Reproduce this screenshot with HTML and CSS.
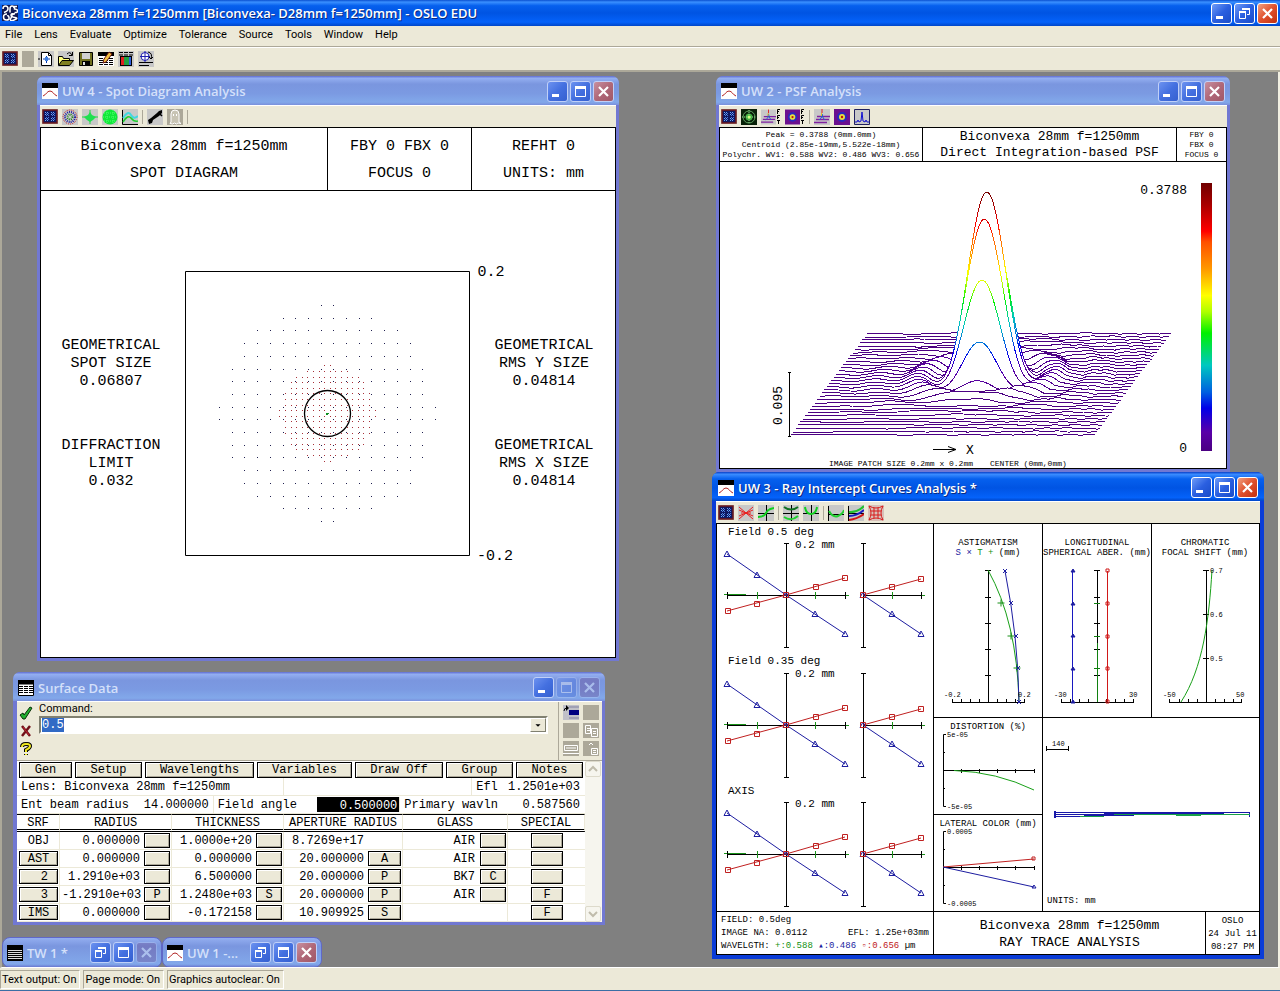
FILE: index.html
```html
<!DOCTYPE html>
<html lang="en">
<head>
<meta charset="utf-8">
<title>OSLO EDU</title>
<link rel="stylesheet" href="styles.css">
</head>
<body>
<svg class="defs" aria-hidden="true">
  <defs>
    <symbol id="i-oslo" viewBox="0 0 16 16"><path d="M0 0h16v16H0z" fill="#101850"/><path d="M1 4q0-3 2.500-3T6 4q0 2-4 3.500M8 7.500V4q0-3 2-3t2 2M15 1.500h-2.500v2.500q3 0 3 2t-3 1.500M5 9q-3.500 0-3.500 3t3 3 2.500-2.500T5 11M13 9q-4-1-4 1t4 2.500-1 2.500-3-2 2-3" fill="none" stroke="#fff" stroke-width="1.500"/></symbol>
    <symbol id="i-graph" viewBox="0 0 16 16"><path d="M0 0h16v16H0z" fill="#fff"/><path d="M0 0h16v5H0z"/><path d="M1 13c3-1 4-5 7-5s4 4 7 5" fill="none" stroke="#b02020"/></symbol>
    <symbol id="i-text" viewBox="0 0 16 16"><path d="M0 0h16v16H0z"/><path d="M1 5.500h14M1 7.500h14M1 9.500h14M1 11.500h14M1 13.500h14" stroke="#ddd"/></symbol>
    <symbol id="i-sheet" viewBox="0 0 16 16"><path d="M0 0h16v16H0z" fill="#fff"/><path d="M0 0h16v4H0zM.5 4v11.500h15V4" stroke="#000" fill="none"/><path d="M0 0h16v4H0z"/><path d="M1 6.500h14M1 8.500h14M1 10.500h14M1 12.500h14" stroke="#000" stroke-dasharray="4 1"/></symbol>
    <symbol id="i-wins" viewBox="0 0 16 16"><path d="M0 0h16v15H0z" fill="#b8b8b8"/><path d="M1 1h14v13H1z" fill="#101860" stroke="#701818" stroke-width="1.500"/><path d="M3 3.500h4M9 3.500h4M3 5.500h4M9 5.500h4M3 9.500h4M9 9.500h4M3 11.500h4M9 11.500h4" stroke="#68a8f8" stroke-dasharray="1 1"/><path d="M4 4.500h3M10 4.500h3M4 6.500h3M10 6.500h3M4 8.500h3M10 8.500h3M4 10.500h3M10 10.500h3" stroke="#4878e0" stroke-dasharray="1 1"/></symbol>
    <symbol id="i-off" viewBox="0 0 12 16"><path d="M0 0h12v16H0z" fill="#aca899"/></symbol>
    <symbol id="i-new" viewBox="0 0 16 16"><path d="M0 0h16v16H0z" fill="#c8c8c8"/><path d="M3.500 1.500h7l3 3v10h-10z" fill="#fff" stroke="#000"/><path d="M10.500 1.500v3h3" fill="none" stroke="#000"/><path d="M5 8h7M8.500 5v7" stroke="#0038b0"/><path d="M7 6h3v4H7z" fill="#4080e0"/><path d="M0 8h2" stroke="#000"/></symbol>
    <symbol id="i-open" viewBox="0 0 16 16"><path d="M0 0h16v16H0z" fill="#c8c8c8"/><path d="M.5 14V5.500h4l1 2h6v2" fill="#ffff80" stroke="#000"/><path d="M.5 14.500l3.500-5h11.500l-4 5z" fill="#808020" stroke="#000"/><path d="M9 3q3-3 5 1M14.500 1v3.500H11" fill="none" stroke="#000"/></symbol>
    <symbol id="i-save" viewBox="0 0 16 16"><path d="M1.500 1.500h13v13h-13z" fill="#707020" stroke="#000"/><path d="M4 2h8v6H4z" fill="#d0d0d0"/><path d="M4 10h8v5H4z"/><path d="M5 11h2v3H5z" fill="#ddd"/></symbol>
    <symbol id="i-edit" viewBox="0 0 16 16"><path d="M0 1h16v14H0z" fill="#fff"/><path d="M0 1h16v4H0z"/><path d="M1 7.500h14M1 9.500h14M1 11.500h14M1 13.500h14" stroke="#000" stroke-dasharray="4 1"/><path d="M11 1l3 2-6 8-3 1 1-4z" fill="#f0c040" stroke="#601010"/></symbol>
    <symbol id="i-spec" viewBox="0 0 16 16"><path d="M0 0h16v16H0z" fill="#c8c8c8"/><path d="M1 1.500h14M1 4h14" stroke="#000" stroke-dasharray="4 1"/><path d="M2 5h12v10H2z"/><path d="M3 6h3v8H3z" fill="#e02020"/><path d="M6 6h5v8H6z" fill="#20a040"/><path d="M11 6h2v8h-2z" fill="#3060e0"/></symbol>
    <symbol id="i-opt" viewBox="0 0 16 16"><path d="M0 0h16v16H0z" fill="#c8c8c8"/><circle cx="7" cy="5.500" r="4" fill="#fff" stroke="#2020b0"/><path d="M2 5.500h10M7 0v11" stroke="#2020b0"/><path d="M10 1q5 1 3 7l-2-2M13 8l2-2M1 11.500h14M1 14.500h10" fill="none" stroke="#000"/></symbol>
    <symbol id="i-rings" viewBox="0 0 16 16"><path d="M0 0h16v16H0z" fill="#c8c8c8"/><g fill="none" stroke-dasharray="1 1"><circle cx="8" cy="8" r="7" stroke="#c02020"/><circle cx="8" cy="8" r="5" stroke="#2020a0" stroke-width="2"/><circle cx="8" cy="8" r="2.500" stroke="#208020" stroke-width="2"/></g></symbol>
    <symbol id="i-spotv" viewBox="0 0 16 16"><path d="M0 0h16v16H0z" fill="#c8c8c8"/><path d="M8 1v14M0 8h16" stroke="#20d840"/><path d="M8 3l2 3 4 2-3 3-3 2-3-2-3-3 4-2z" fill="#20e050"/></symbol>
    <symbol id="i-ball" viewBox="0 0 16 16"><path d="M0 0h16v16H0z" fill="#c8c8c8"/><circle cx="8" cy="8" r="7.500" fill="#10e838"/><path d="M2 4h12M1 8h14M2 12h12M5 1v14M11 1v14" stroke="#50ff70" stroke-dasharray="1 1"/></symbol>
    <symbol id="i-curve" viewBox="0 0 16 16"><path d="M0 0h16v16H0z" fill="#c8c8c8"/><path d="M.5 1v14.500H16" fill="none" stroke="#000"/><path d="M1 9q5-8 8-3t7 1" fill="none" stroke="#40d8e0" stroke-width="2"/><path d="M1 13q5-8 8-4t7 3" fill="none" stroke="#20d030" stroke-width="1.500"/></symbol>
    <symbol id="i-plane" viewBox="0 0 16 16"><path d="M0 0h16v16H0z" fill="#c8c8c8"/><path d="M1 11l3-2 6-5 2-2 3-1v3l-3 3-6 4-1 3-3 1z"/><path d="M12 4l3 3" stroke="#000" stroke-width="1.500"/></symbol>
    <symbol id="i-ghost" viewBox="0 0 16 16"><path d="M0 0h16v16H0z" fill="#aca899"/><path d="M4 13V5q0-4 4-4t4 4v8l2 1.500-3-.5-1.500 1-2-1-2 1-2.500-.5z" fill="#c8c4b4" stroke="#fff"/><path d="M6 5h1v2H6zM9 5h1v2H9z" fill="#fff"/></symbol>
    <symbol id="i-radar" viewBox="0 0 16 16"><path d="M0 0h16v16H0z" fill="#082008"/><circle cx="8" cy="8" r="6" fill="none" stroke="#60a060"/><circle cx="8" cy="8" r="3.500" fill="#40b040"/><path d="M8 1v14M1 8h14" stroke="#90e090" stroke-dasharray="1 1"/><circle cx="8" cy="8" r="1.500" fill="#d0ff80"/></symbol>
    <symbol id="i-psf" viewBox="0 0 16 16"><path d="M0 0h16v16H0z" fill="#c8c8c8"/><path d="M3 7.500h13M2 10.500h13M0 13.500h13" stroke="#8020a0" stroke-width="1.300"/><path d="M5 11q3-1 3-6 1 5 3 6" fill="none" stroke="#2060d0"/><path d="M8 0v4" stroke="#e02020"/><path d="M7.500 4v3" stroke="#e0c020"/></symbol>
    <symbol id="i-map" viewBox="0 0 16 16"><path d="M0 0h16v16H0z" fill="#6a1090"/><circle cx="8" cy="8" r="5" fill="#2828c0"/><circle cx="8" cy="8" r="3" fill="#e8e040"/><circle cx="8" cy="8" r="1.200" fill="#c01010"/></symbol>
    <symbol id="i-fft" viewBox="0 0 5 16"><path d="M1.500 5V.5H4M1 2.500h2M1.500 10V6.500H4M1 8.500h2M1 11.500h3M2.500 11v4" fill="none" stroke="#000"/></symbol>
    <symbol id="i-line" viewBox="0 0 16 16"><path d="M.5.5h15v15H.5z" fill="#c8c8c8" stroke="#202060"/><path d="M1 13h2l1-2 1 2 2-1 1-9 1 9 2 1 1-2 1 2h2" fill="none" stroke="#1010d0"/></symbol>
    <symbol id="i-fan" viewBox="0 0 16 16"><path d="M0 0h16v16H0z" fill="#c8c8c8"/><path d="M1 2l14 12M1 14L15 2M1 5l14 6M1 11l14-6M3 8h10" stroke="#e82020"/></symbol>
    <symbol id="i-ray" viewBox="0 0 16 16"><path d="M0 0h16v16H0z" fill="#c8c8c8"/><path d="M0 8.500h16M8.500 0v16" stroke="#000"/><path d="M0 12q6 0 8-4t8-5" fill="none" stroke="#10d020" stroke-width="2"/></symbol>
    <symbol id="i-fc" viewBox="0 0 16 16"><path d="M0 0h16v16H0z" fill="#c8c8c8"/><path d="M0 8.500h16M8.500 0v16" stroke="#000"/><path d="M1 2q7 5 14 0" fill="none" stroke="#107020" stroke-width="2"/><path d="M1 12q7 5 14-1" fill="none" stroke="#20d030" stroke-width="2"/></symbol>
    <symbol id="i-opd" viewBox="0 0 16 16"><path d="M0 0h16v16H0z" fill="#c8c8c8"/><path d="M0 8.500h16M8.500 0v16" stroke="#000"/><path d="M2 2q1 7 6 7t6-7" fill="none" stroke="#10d020" stroke-width="2"/></symbol>
    <symbol id="i-mtf" viewBox="0 0 16 16"><path d="M0 0h16v16H0z" fill="#c8c8c8"/><path d="M.5 1v15M0 9.500h16" stroke="#000"/><path d="M1 6q4 7 9 5t6-6" fill="none" stroke="#20d030" stroke-width="2"/></symbol>
    <symbol id="i-chroma" viewBox="0 0 16 16"><path d="M0 0h16v16H0z" fill="#c8c8c8"/><path d="M.5 1v15M0 8.500h16" stroke="#000"/><path d="M1 7q8 1 15-6" fill="none" stroke="#20c030" stroke-width="2"/><path d="M1 11q8 0 15-6" fill="none" stroke="#1818c0" stroke-width="2"/><path d="M1 15q8-1 15-6" fill="none" stroke="#d01818" stroke-width="2"/></symbol>
    <symbol id="i-grid" viewBox="0 0 16 16"><path d="M0 0h16v16H0z" fill="#d8c0b8"/><path d="M1 1q7 4 14 0-4 7 0 14-7-4-14 0 4-7 0-14M6 3v10M10 3v10M3 6h10M3 10h10" fill="none" stroke="#d81818"/></symbol>
    <symbol id="c-min" viewBox="0 0 19 19"><path d="M4 12h7v3H4z" fill="#fff"/></symbol>
    <symbol id="c-max" viewBox="0 0 19 19"><path d="M4.500 5v9.500h10V5" fill="none" stroke="#fff"/><path d="M4 4h11v3H4z" fill="#fff"/></symbol>
    <symbol id="c-res" viewBox="0 0 19 19"><path d="M7.500 6V4.500h7v6H12M4.500 8v6.500h6V8" fill="none" stroke="#fff"/><path d="M4 7h7v2H4zM7 4h8v2H7z" fill="#fff"/></symbol>
    <symbol id="c-x" viewBox="0 0 19 19"><path d="M5 5l9 9M14 5l-9 9" stroke="#fff" stroke-width="2.200"/></symbol>
    <g id="tri"><path d="M-3 2.500h6L0-3z" fill="none" stroke="#1c1ca0"/></g>
    <g id="sq"><path d="M-2.500-2.500h5v5h-5z" fill="none" stroke="#c02020"/></g>
    <g id="plus"><path d="M-3.500 0h7M0-3.500v7" stroke="#189018"/></g>
    <g id="ex"><path d="M-2-2l4 4M-2 2l4-4" stroke="#1c1ca0"/></g>
    <g id="rayfan" fill="none">
      <path d="M724 594.500h22" stroke="#189018"/>
      <path d="M786.500 543v104M784 543.500h5M784 647.500h5M727 595.500h118M727.500 592v7M845.500 592v7M863.500 543v104M861 543.500h5M861 647.500h5M863 595.500h58M921.500 592v7" stroke="#000"/>
      <path d="M727 554l59 41 59 39M863 595l58 39" stroke="#1c1ca0"/>
      <path d="M727 611l59-16 59-17M863 595l58-16" stroke="#c02020"/>
      <path d="M757.500 592v7M815.500 592v7M892.500 592v7M846 595.500h3M922 595.500h3" stroke="#189018"/>
      <use href="#tri" x="727" y="554"/><use href="#tri" x="757" y="575"/><use href="#tri" x="786" y="595"/><use href="#tri" x="815" y="614"/><use href="#tri" x="845" y="634"/><use href="#tri" x="863" y="595"/><use href="#tri" x="892" y="614"/><use href="#tri" x="921" y="634"/>
      <use href="#sq" x="728" y="611"/><use href="#sq" x="757" y="604"/><use href="#sq" x="786" y="595"/><use href="#sq" x="816" y="587"/><use href="#sq" x="845" y="578"/><use href="#sq" x="863" y="595"/><use href="#sq" x="892" y="587"/><use href="#sq" x="921" y="579"/>
    </g>
    <linearGradient id="heat"><stop offset="0" stop-color="#4b0082"/><stop offset=".07" stop-color="#5a00a8"/><stop offset=".16" stop-color="#0000e8"/><stop offset=".22" stop-color="#0060e0"/><stop offset=".32" stop-color="#00c8c0"/><stop offset=".44" stop-color="#00f000"/><stop offset=".52" stop-color="#b0ff00"/><stop offset=".58" stop-color="#ffff00"/><stop offset=".68" stop-color="#ff9800"/><stop offset=".78" stop-color="#ff5000"/><stop offset=".82" stop-color="#ff0000"/><stop offset=".92" stop-color="#a80000"/><stop offset="1" stop-color="#700000"/></linearGradient>
  </defs>
</svg>

<div class="app">
  <header class="app-title">
    <svg class="ico"><use href="#i-oslo"/></svg>
    <h1>Biconvexa 28mm f=1250mm [Biconvexa- D28mm f=1250mm] - OSLO EDU</h1>
    <div class="caps">
      <button class="cap" aria-label="Minimize"><svg><use href="#c-min"/></svg></button>
      <button class="cap" aria-label="Restore"><svg><use href="#c-res"/></svg></button>
      <button class="cap close" aria-label="Close"><svg><use href="#c-x"/></svg></button>
    </div>
  </header>
  <nav class="menu"><button>File</button><button>Lens</button><button>Evaluate</button><button>Optimize</button><button>Tolerance</button><button>Source</button><button>Tools</button><button>Window</button><button>Help</button></nav>
  <div class="tools main-tools">
    <button aria-label="Windows"><svg><use href="#i-wins"/></svg></button>
    <button class="narrow" aria-label="Unavailable" disabled><svg><use href="#i-off"/></svg></button>
    <button aria-label="New lens"><svg><use href="#i-new"/></svg></button>
    <button aria-label="Open"><svg><use href="#i-open"/></svg></button>
    <button aria-label="Save"><svg><use href="#i-save"/></svg></button>
    <button aria-label="Edit surfaces"><svg><use href="#i-edit"/></svg></button>
    <button aria-label="Wavelengths"><svg><use href="#i-spec"/></svg></button>
    <button aria-label="Optimize"><svg><use href="#i-opt"/></svg></button>
  </div>

  <main class="desktop">
    <section class="win uw4">
      <header class="bar"><svg class="ico"><use href="#i-graph"/></svg><h2>UW 4 - Spot Diagram Analysis</h2>
        <div class="caps"><button class="cap" aria-label="Minimize"><svg><use href="#c-min"/></svg></button><button class="cap" aria-label="Maximize"><svg><use href="#c-max"/></svg></button><button class="cap close" aria-label="Close"><svg><use href="#c-x"/></svg></button></div></header>
      <div class="tools">
        <button aria-label="Windows"><svg><use href="#i-wins"/></svg></button><button aria-label="Spot diagram"><svg><use href="#i-rings"/></svg></button><button aria-label="Spot versus field"><svg><use href="#i-spotv"/></svg></button><button aria-label="Pupil"><svg><use href="#i-ball"/></svg></button><button aria-label="Energy"><svg><use href="#i-curve"/></svg></button><i></i><button aria-label="Footprint"><svg><use href="#i-plane"/></svg></button><button aria-label="Ghost" disabled><svg><use href="#i-ghost"/></svg></button><i></i>
      </div>
      <div class="canvas">
        <div class="heads heads4 t15"><p>Biconvexa 28mm f=1250mm<br>SPOT DIAGRAM</p><p>FBY 0 FBX 0<br>FOCUS 0</p><p>REFHT 0<br>UNITS: mm</p></div>
        <svg class="plot t15" viewBox="41 191 574 466" text-anchor="middle">
          <g id="dots" shape-rendering="crispEdges"></g>
          <path d="M185.500 271.500h284v284h-284z" fill="none" stroke="#000"/>
          <circle cx="327.500" cy="413.500" r="23" fill="none" stroke="#000" stroke-width="1.300"/>
          <path d="M326 413h3v1h-3zM326 414h2v1h-2z" fill="#109020"/>
          <text x="491" y="276">0.2</text><text x="495" y="560">-0.2</text>
          <text x="111" y="349">GEOMETRICAL</text><text x="111" y="367">SPOT SIZE</text><text x="111" y="385">0.06807</text>
          <text x="111" y="449">DIFFRACTION</text><text x="111" y="467">LIMIT</text><text x="111" y="485">0.032</text>
          <text x="544" y="349">GEOMETRICAL</text><text x="544" y="367">RMS Y SIZE</text><text x="544" y="385">0.04814</text>
          <text x="544" y="449">GEOMETRICAL</text><text x="544" y="467">RMS X SIZE</text><text x="544" y="485">0.04814</text>
        </svg>
      </div>
    </section>

    <section class="win uw2">
      <header class="bar"><svg class="ico"><use href="#i-graph"/></svg><h2>UW 2 - PSF Analysis</h2>
        <div class="caps"><button class="cap" aria-label="Minimize"><svg><use href="#c-min"/></svg></button><button class="cap" aria-label="Maximize"><svg><use href="#c-max"/></svg></button><button class="cap close" aria-label="Close"><svg><use href="#c-x"/></svg></button></div></header>
      <div class="tools">
        <button aria-label="Windows"><svg><use href="#i-wins"/></svg></button><button aria-label="Wavefront"><svg><use href="#i-radar"/></svg></button><button class="fft" aria-label="FFT PSF"><svg><use href="#i-psf"/></svg><svg class="tag"><use href="#i-fft"/></svg></button><button class="fft" aria-label="FFT map"><svg><use href="#i-map"/></svg><svg class="tag"><use href="#i-fft"/></svg></button><i></i><button aria-label="Direct PSF"><svg><use href="#i-psf"/></svg></button><button aria-label="Direct map"><svg><use href="#i-map"/></svg></button><button aria-label="PSF scan"><svg><use href="#i-line"/></svg></button>
      </div>
      <div class="canvas">
        <div class="heads heads2 t13"><p class="t8">Peak = 0.3788 (0mm.0mm)<br>Centroid (2.85e-19mm,5.522e-18mm)<br>Polychr. WV1: 0.588 WV2: 0.486 WV3: 0.656</p><p>Biconvexa 28mm f=1250mm<br>Direct Integration-based PSF</p><p class="t8">FBY 0<br>FBX 0<br>FOCUS 0</p></div>
        <svg class="plot t13" viewBox="720 162 506 306">
          <g id="psf" shape-rendering="crispEdges"></g>
          <g id="scale" shape-rendering="crispEdges"></g>
          <text x="1187" y="194" text-anchor="end">0.3788</text><text x="1187" y="452" text-anchor="end">0</text>
          <path d="M788 372.500h3M789.500 372v64M788 436.500h3M933 449.500h23M948 446.500l8 3-8 3" fill="none" stroke="#000"/>
          <text x="966" y="454">X</text>
          <text transform="translate(782 425) rotate(-90)">0.095</text>
          <text class="t8" x="829" y="466">IMAGE PATCH SIZE 0.2mm x 0.2mm</text><text class="t8" x="990" y="466">CENTER (0mm,0mm)</text>
        </svg>
      </div>
    </section>

    <section class="win uw3 active">
      <header class="bar"><svg class="ico"><use href="#i-graph"/></svg><h2>UW 3 - Ray Intercept Curves Analysis *</h2>
        <div class="caps"><button class="cap" aria-label="Minimize"><svg><use href="#c-min"/></svg></button><button class="cap" aria-label="Maximize"><svg><use href="#c-max"/></svg></button><button class="cap close" aria-label="Close"><svg><use href="#c-x"/></svg></button></div></header>
      <div class="tools">
        <button aria-label="Windows"><svg><use href="#i-wins"/></svg></button><button aria-label="Report"><svg><use href="#i-fan"/></svg></button><button aria-label="Ray intercept"><svg><use href="#i-ray"/></svg></button><i></i><button aria-label="Field curves"><svg><use href="#i-fc"/></svg></button><button aria-label="OPD"><svg><use href="#i-opd"/></svg></button><i></i><button aria-label="Lateral"><svg><use href="#i-mtf"/></svg></button><button aria-label="Chromatic"><svg><use href="#i-chroma"/></svg></button><button aria-label="Distortion"><svg><use href="#i-grid"/></svg></button>
      </div>
      <div class="canvas">
        <div class="report">
          <div class="fans"><svg class="plot t11" viewBox="717 524 216 387">
            <use href="#rayfan"/><use href="#rayfan" y="130"/><use href="#rayfan" y="259"/>
            <text x="728" y="535">Field 0.5 deg</text><text x="795" y="548">0.2 mm</text>
            <text x="728" y="664">Field 0.35 deg</text><text x="795" y="677">0.2 mm</text>
            <text x="728" y="794">AXIS</text><text x="795" y="807">0.2 mm</text></svg></div>
          <div><svg class="plot t9" viewBox="934 524 108 193" fill="none">
            <path d="M988.500 570v132M985 570.500h6M985 597.500h6M985 623.500h6M985 649.500h6M985 675.500h6M952 702.500h73M952.500 699v4M961.500 699v4M970.500 699v4M979.500 699v4M997.500 699v4M1006.500 699v4M1015.500 699v4M1024.500 699v4" stroke="#000"/>
            <path d="M988 570Q1017 622 1019 702" stroke="#18a018"/><path d="M1005 571Q1018 636 1019 702" stroke="#1c1ca0"/>
            <use href="#plus" x="1001" y="603"/><use href="#plus" x="1011" y="636"/><use href="#plus" x="1017" y="668"/><use href="#ex" x="1005" y="571"/><use href="#ex" x="1011" y="603"/><use href="#ex" x="1016" y="636"/><use href="#ex" x="1018" y="668"/><use href="#ex" x="1019" y="702"/>
            <text x="988" y="545" text-anchor="middle">ASTIGMATISM</text><text x="988" y="555" text-anchor="middle"><tspan class="blue">S ×</tspan> <tspan class="green">T +</tspan> (mm)</text>
            <text class="t7" x="944" y="697">-0.2</text><text class="t7" x="1018" y="697">0.2</text></svg></div>
          <div><svg class="plot t9" viewBox="1043 524 108 193" fill="none">
            <path d="M1097.500 570v132M1094 570.500h6M1094 597.500h6M1094 623.500h6M1094 649.500h6M1094 675.500h6M1061 702.500h73M1061.500 699v4M1070.500 699v4M1079.500 699v4M1088.500 699v4M1106.500 699v4M1115.500 699v4M1124.500 699v4M1133.500 699v4" stroke="#000"/>
            <path d="M1097.500 643v59M1094 603.500h6M1094 636.500h6M1094 668.500h6" stroke="#108010"/>
            <path d="M1072.500 571v131" stroke="#1818c0"/><path d="M1107.500 571v131" stroke="#d01818"/>
            <path d="M1071 572h4l-2-3zM1071 605h4l-2-3zM1071 637h4l-2-3zM1071 670h4l-2-3zM1071 703h4l-2-3z" fill="#1c1ca0" stroke="#1c1ca0"/>
            <path d="M1106 569h3v3h-3zM1106 602h3v3h-3zM1106 635h3v3h-3zM1106 667h3v3h-3zM1106 700h3v3h-3z" stroke="#d01818"/>
            <text x="1097" y="545" text-anchor="middle">LONGITUDINAL</text><text x="1097" y="555" text-anchor="middle">SPHERICAL ABER. (mm)</text>
            <text class="t7" x="1054" y="697">-30</text><text class="t7" x="1129" y="697">30</text></svg></div>
          <div class="last"><svg class="plot t9" viewBox="1152 524 107 193" fill="none">
            <path d="M1206.500 570v132M1203 570.500h6M1203 614.500h6M1203 658.500h6M1169 702.500h73M1169.500 699v4M1179.500 699v4M1188.500 699v4M1197.500 699v4M1215.500 699v4M1224.500 699v4M1233.500 699v4M1241.500 699v4" stroke="#000"/>
            <path d="M1212 570C1209 620 1203 668 1181 702" stroke="#18a018"/>
            <text x="1205" y="545" text-anchor="middle">CHROMATIC</text><text x="1205" y="555" text-anchor="middle">FOCAL SHIFT (mm)</text>
            <text class="t7" x="1210" y="573">0.7</text><text class="t7" x="1210" y="617">0.6</text><text class="t7" x="1210" y="661">0.5</text><text class="t7" x="1163" y="697">-50</text><text class="t7" x="1236" y="697">50</text></svg></div>
          <div><svg class="plot t9" viewBox="934 718 108 96" fill="none">
            <path d="M946 734.500h-2.500v72h2.500M943 752.500h2M943 788.500h2M943 770.500h91M961.500 769v4M979.500 769v4M997.500 769v4M1015.500 769v4M1034.500 769v4" stroke="#000"/><path d="M954 770.500Q997 772 1034 790" stroke="#18a018"/>
            <text x="988" y="729" text-anchor="middle">DISTORTION (%)</text><text class="t7" x="947" y="737">5e-05</text><text class="t7" x="947" y="809">-5e-05</text></svg></div>
          <div class="layout"><svg class="plot t9" viewBox="1043 718 216 193" fill="none">
            <path d="M1046.500 746v5M1068.500 746v5M1046 749.500h22" stroke="#000"/><text class="t7" x="1052" y="746">140</text>
            <path d="M1054 812.500h196M1054 814.500h60M1104 813.500h120M1054 816.500h30M1084 815.500h50M1054.500 811v7M1055.500 811v7M1249.500 812v5" stroke="#1818a8"/>
            <path d="M1114 814.500h136M1080 816.500h24M1176 815.500h25" stroke="#18a048"/>
            <text x="1047" y="903">UNITS: mm</text></svg></div>
          <div><svg class="plot t9" viewBox="934 815 108 96" fill="none">
            <path d="M946 831.500h-2.500v72h2.500M943 849.500h2M943 885.500h2M943 867.500h91M961.500 866v4M979.500 866v4M997.500 866v4M1015.500 866v4M1034.500 866v4" stroke="#000"/><path d="M943 867l91-8M1032 857h3v3h-3z" stroke="#c02020"/><path d="M943 867l91 20M1032 888h4l-2-3z" stroke="#1c1ca0"/>
            <text x="988" y="826" text-anchor="middle">LATERAL COLOR (mm)</text><text class="t7" x="947" y="834">0.0005</text><text class="t7" x="947" y="906">-0.0005</text></svg></div>
        </div>
        <div class="heads heads3 t9"><div class="facts"><p>FIELD: 0.5deg</p><p class="split"><span>IMAGE NA: 0.0112</span><span>EFL: 1.25e+03mm</span></p><p>WAVELGTH: <span class="green">+:0.588</span> <span class="blue">▴:0.486</span> <span class="red">▫:0.656</span> µm</p></div><p class="t13">Biconvexa 28mm f=1250mm<br>RAY TRACE ANALYSIS</p><p class="stamp">OSLO<br>24 Jul 11<br>08:27 PM</p></div>
      </div>
    </section>

    <section class="win surf">
      <header class="bar"><svg class="ico"><use href="#i-sheet"/></svg><h2>Surface Data</h2>
        <div class="caps"><button class="cap" aria-label="Minimize"><svg><use href="#c-min"/></svg></button><button class="cap off" aria-label="Maximize" disabled><svg><use href="#c-max"/></svg></button><button class="cap close off" aria-label="Close" disabled><svg><use href="#c-x"/></svg></button></div></header>
      <div class="command">
        <div class="acts">
          <button aria-label="Accept"><svg viewBox="0 0 14 14"><path d="M1 9l3-2 1 2 6-8 2 1-7 11H4z" fill="#20b030" stroke="#083008"/></svg></button>
          <button aria-label="Cancel"><svg viewBox="0 0 14 14"><path d="M3 2l8 10M11 2L3 12" stroke="#701018" stroke-width="2.500"/><path d="M4 3l6 8" stroke="#c02030"/></svg></button>
          <button aria-label="Help"><svg viewBox="0 0 14 14"><path d="M3 5q0-3 4-3t4 2q0 2-4 4v2M7 12v1" fill="none" stroke="#000" stroke-width="4"/><path d="M3 5q0-3 4-3t4 2q0 2-4 4v2M7 12v1" fill="none" stroke="#f0e820" stroke-width="2"/></svg></button>
        </div>
        <div class="entry"><label for="cmd">Command:</label><div class="combo"><input id="cmd" type="text" value="0.5"><button aria-label="History"><svg viewBox="0 0 16 14"><path d="M5 6h6L8 9z"/></svg></button></div></div>
        <div class="palette">
          <button aria-label="Insert"><svg viewBox="0 0 16 15"><path d="M0 0h16v15H0z" fill="#c0c0c8"/><path d="M6 5h10v5H6z" fill="#000080"/><path d="M6 2h10M6 13h10" stroke="#8080a0"/><path d="M1 6q0-3 3-3" fill="none" stroke="#000"/><path d="M3 0v6l3-3z"/></svg></button><button aria-label="Blank" disabled><svg viewBox="0 0 16 15"><path d="M0 0h16v15H0z" fill="#aca899"/></svg></button>
          <button aria-label="Cut" disabled><svg viewBox="0 0 16 15"><path d="M0 0h16v15H0z" fill="#aca899"/></svg></button><button aria-label="Copy" disabled><svg viewBox="0 0 16 15"><path d="M0 0h16v15H0z" fill="#aca899"/><path d="M2.500 2.500h5v8h-5zM8.500 5.500h6v8h-6zM4 5.500h3M4 7.500h3M10 8.500h3M10 10.500h3" fill="none" stroke="#fff"/></svg></button>
          <button aria-label="Rows" disabled><svg viewBox="0 0 16 15"><path d="M0 0h16v15H0z" fill="#aca899"/><path d="M1.500 4.500h13v5h-13zM3 7h10" fill="none" stroke="#fff"/><path d="M0 12.500h16" stroke="#fff"/></svg></button><button aria-label="Paste" disabled><svg viewBox="0 0 16 15"><path d="M0 0h16v15H0z" fill="#aca899"/><path d="M6 4l2-2 2 2M8.500 7.500h6v6h-6zM10 9.500h3M10 11.500h3" fill="none" stroke="#fff"/></svg></button>
        </div>
      </div>
      <div class="sheet">
        <div class="grid">
          <div class="keys"><button>Gen</button><button>Setup</button><button>Wavelengths</button><button>Variables</button><button>Draw Off</button><button>Group</button><button>Notes</button></div>
          <div class="line lens"><span>Lens: Biconvexa 28mm f=1250mm</span><span></span><span>Efl</span><span class="num">1.2501e+03</span></div>
          <div class="line beam"><span>Ent beam radius</span><span class="num">14.000000</span><span>Field angle</span><span class="num hot">0.500000</span><span>Primary wavln</span><span class="num">0.587560</span></div>
          <table>
            <colgroup><col class="c1"><col class="cv"><col class="cb"><col class="cv"><col class="cb"><col class="cv"><col class="cw"><col class="cg"><col class="cb"><col></colgroup>
            <thead><tr><th>SRF</th><th colspan="2">RADIUS</th><th colspan="2">THICKNESS</th><th colspan="2">APERTURE RADIUS</th><th colspan="2">GLASS</th><th>SPECIAL</th></tr></thead>
            <tbody>
              <tr><td class="mid">OBJ</td><td>0.000000</td><td><button aria-label="Radius OBJ"></button></td><td>1.0000e+20</td><td><button aria-label="Thickness OBJ"></button></td><td>8.7269e+17</td><td></td><td>AIR</td><td><button aria-label="Glass OBJ"></button></td><td class="sp"><button aria-label="Special OBJ"></button></td></tr>
              <tr><td><button>AST</button></td><td>0.000000</td><td><button aria-label="Radius AST"></button></td><td>0.000000</td><td><button aria-label="Thickness AST"></button></td><td>20.000000</td><td><button>A</button></td><td>AIR</td><td><button aria-label="Glass AST"></button></td><td class="sp"><button aria-label="Special AST"></button></td></tr>
              <tr><td><button class="n">2</button></td><td>1.2910e+03</td><td><button aria-label="Radius 2"></button></td><td>6.500000</td><td><button aria-label="Thickness 2"></button></td><td>20.000000</td><td><button>P</button></td><td>BK7</td><td><button>C</button></td><td class="sp"><button aria-label="Special 2"></button></td></tr>
              <tr><td><button class="n">3</button></td><td>-1.2910e+03</td><td><button>P</button></td><td>1.2480e+03</td><td><button>S</button></td><td>20.000000</td><td><button>P</button></td><td>AIR</td><td><button aria-label="Glass 3"></button></td><td class="sp"><button>F</button></td></tr>
              <tr><td><button>IMS</button></td><td>0.000000</td><td><button aria-label="Radius IMS"></button></td><td>-0.172158</td><td><button aria-label="Thickness IMS"></button></td><td>10.909925</td><td><button>S</button></td><td></td><td></td><td class="sp"><button>F</button></td></tr>
            </tbody>
          </table>
        </div>
        <div class="scroll"><button aria-label="Scroll up"><svg viewBox="0 0 14 14"><path d="M3 9l4-4 4 4" fill="none" stroke="#c0bcac" stroke-width="2"/></svg></button><button aria-label="Scroll down"><svg viewBox="0 0 14 14"><path d="M3 5l4 4 4-4" fill="none" stroke="#c0bcac" stroke-width="2"/></svg></button></div>
      </div>
    </section>

    <section class="mini tw1"><svg class="ico"><use href="#i-text"/></svg><h2>TW 1 *</h2><div class="caps"><button class="cap" aria-label="Restore"><svg><use href="#c-res"/></svg></button><button class="cap" aria-label="Maximize"><svg><use href="#c-max"/></svg></button><button class="cap close off" aria-label="Close" disabled><svg><use href="#c-x"/></svg></button></div></section>
    <section class="mini uw1"><svg class="ico"><use href="#i-graph"/></svg><h2>UW 1 -...</h2><div class="caps"><button class="cap" aria-label="Restore"><svg><use href="#c-res"/></svg></button><button class="cap" aria-label="Maximize"><svg><use href="#c-max"/></svg></button><button class="cap close" aria-label="Close"><svg><use href="#c-x"/></svg></button></div></section>
  </main>

  <footer class="status"><span>Text output: On</span><span>Page mode: On</span><span>Graphics autoclear: On</span></footer>
</div>
<script src="plots.js"></script>
</body>
</html>
```
FILE: styles.css
```css
* { box-sizing: border-box; }
body { margin: 0; font-family: Roboto, "Noto Sans", sans-serif; font-size: 11px; color: #000; }
h1, h2, p { margin: 0; font-size: 13px; font-weight: 600; }
h1, h2 { font-family: "Open Sans", "Noto Sans", sans-serif; }
button { font: inherit; color: inherit; padding: 0; margin: 0; border: 0; background: none; }
button svg { display: block; width: 100%; height: 100%; }
.defs { position: absolute; width: 0; height: 0; }
.ico { width: 16px; height: 16px; flex: none; }

.app { display: flex; flex-direction: column; min-height: 100vh; background: #ece9d8; border-bottom: 1px solid #3a6ea5; }
.app-title { display: flex; align-items: center; gap: 4px; height: 26px; padding: 0 2px; color: #fff;
  background: linear-gradient(#0a50d0, #3a90ff 8%, #0660ee 22%, #0054e3 50%, #0462fa 85%, #0046c8); text-shadow: 1px 1px #0a2a80; }
.app-title h1, .bar h2, .mini h2 { flex: 1; white-space: nowrap; overflow: hidden; line-height: 20px; }

.menu { display: flex; gap: 12px; height: 21px; padding: 0 5px 3px; border-bottom: 1px solid #aca899; }
.tools { display: flex; align-items: center; gap: 4px; height: 22px; padding: 0 2px; background: #ece9d8; border-top: 1px solid #fff; }
.tools button { width: 16px; height: 16px; flex: none; }
.tools .narrow { width: 12px; }
.tools .fft { width: 20px; display: flex; }
.fft svg { width: 15px; }
.fft .tag { width: 5px; }
.tools i { width: 1px; height: 14px; background: #aca899; }
.main-tools { height: 25px; border-bottom: 2px solid #aca899; }

.desktop { position: relative; flex: 1; background: #808080; border-left: 2px solid #aca899; border-right: 2px solid #f1efe2; border-bottom: 1px solid #fff; overflow: hidden; }

.caps { display: flex; gap: 2px; flex: none; }
.cap { width: 21px; height: 21px; border: 1px solid #fff; border-radius: 3px; background: linear-gradient(135deg, #6f9cf8, #2a5fe0 50%, #1a4cc8); }
.cap.close { background: linear-gradient(135deg, #f0a080, #e0502c 50%, #c03010); }

.win { position: absolute; display: flex; flex-direction: column; border: 3px solid #7178d2; border-top: 0; border-radius: 8px 8px 0 0; background: #7178d2; }
.bar { display: flex; align-items: center; gap: 4px; height: 29px; flex: none; margin: 0 -3px; padding: 1px 5px 0; color: #d4e0fa; border-radius: 7px 7px 0 0;
  background: linear-gradient(#5f6cd0, #93aef0 8%, #7a96df 28%, #7b9ae2 60%, #82a8ea 90%, #7a90dc); }
.win .cap, .mini .cap { border-color: #c0d0f8; background: linear-gradient(135deg, #6c92f0, #4470e0 50%, #3560d0); }
.win .cap.close, .mini .cap.close { background: linear-gradient(135deg, #c890a0, #b06878 50%, #a05868); }
.win .cap.off, .mini .cap.off { opacity: .35; }
.win .cap.close.off, .mini .cap.close.off { background: #6a4a90; }
.active { border-color: #0a3cd8; border-width: 0 4px 4px; background: #0a3cd8; }
.active .bar { margin: 0 -4px; padding: 2px 6px 0; color: #fff; text-shadow: 1px 1px #0a2a80; background: linear-gradient(#0a40c8, #3a8cff 8%, #0660ee 24%, #0054e3 55%, #0462fa 88%, #0046c8); }
.active .cap { border-color: #fff; background: linear-gradient(135deg, #6f9cf8, #2a5fe0 50%, #1a4cc8); }
.active .cap.close { background: linear-gradient(135deg, #f0a080, #e0502c 50%, #c03010); }

.uw4 { left: 35px; top: 4px; width: 582px; height: 585px; }
.uw2 { left: 714px; top: 4px; width: 514px; height: 396px; }
.uw3 { left: 710px; top: 400px; width: 552px; height: 487px; }
.surf { left: 11px; top: 600px; width: 592px; height: 253px; border-left-width: 4px; }
.surf .bar { margin-left: -4px; padding-top: 2px; }
.mini { position: absolute; top: 865px; width: 160px; height: 31px; display: flex; align-items: center; gap: 4px; padding: 0 4px; color: #d4e0fa; border: 1px solid #6068c8; border-radius: 8px;
  background: linear-gradient(#93aef0, #7a96df 28%, #82a8ea 90%, #6a78d0); }
.tw1 { left: 0; }
.uw1 { left: 160px; }

.canvas { flex: 1; min-height: 0; display: flex; flex-direction: column; background: #fff; border: 1px solid #000; }
.canvas, .sheet { font-family: "Liberation Mono", monospace; }
.canvas p { font-size: inherit; font-weight: 400; }
.plot { display: block; width: 100%; flex: 1; min-height: 0; }
.plot text { fill: #000; white-space: pre; }
.t15 { font-size: 15px; }
.t13, .canvas p.t13 { font-size: 13px; }
.t11 { font-size: 11px; }
.t9 { font-size: 9px; }
.t8, .canvas p.t8 { font-size: 8px; }
.t7 { font-size: 7px; }
.blue, .plot .blue { color: #1c1ca0; fill: #1c1ca0; }
.green, .plot .green { color: #109010; fill: #109010; }
.red { color: #c02020; }

.heads { display: grid; flex: none; text-align: center; border-bottom: 1px solid #000; white-space: nowrap; }
.heads > * { display: flex; flex-direction: column; justify-content: center; border-right: 1px solid #000; }
.heads > p { display: block; }
.heads > :last-child { border-right: 0; }
.heads4 { grid-template-columns: 287fr 144fr 143fr; line-height: 27px; height: 63px; }
.heads4 > p { padding-top: 5px; }
.heads2 { grid-template-columns: 203fr 254fr 49fr; line-height: 16px; height: 34px; }
.heads2 .t8 { line-height: 10px; }
.heads2 > p { padding-top: 1px; }
.heads2 > .t8 { padding-top: 2px; }
.heads3 { grid-template-columns: 217fr 272fr 53fr; height: 42px; border-bottom: 0; }
.facts { text-align: left; padding: 0 4px; line-height: 13px; }
.split { display: flex; justify-content: space-between; }
.heads3 .t13 { line-height: 17px; padding-top: 5px; }
.stamp { line-height: 13px; padding-top: 3px; }
.report { flex: 1; min-height: 0; display: grid; grid-template-columns: 217fr 109fr 109fr 107fr; grid-template-rows: 194fr 97fr 97fr; }
.report > div { display: flex; min-width: 0; min-height: 0; border-right: 1px solid #000; border-bottom: 1px solid #000; }
.report .fans { grid-row: 1 / 4; }
.report .last, .report .layout { border-right: 0; }
.report .layout { grid-column: 3 / 5; grid-row: 2 / 4; }

.command { display: flex; height: 60px; flex: none; background: #ece9d8; border-top: 1px solid #fff; border-bottom: 1px solid #aca899; }
.acts { display: flex; flex-direction: column; gap: 4px; width: 22px; padding: 4px 3px 4px 2px; }
.acts button { width: 14px; height: 14px; }
.entry { flex: 1; display: flex; flex-direction: column; font-size: 11px; line-height: 14px; }
.combo { display: flex; height: 18px; margin-right: 10px; border: 2px solid; border-color: #808070 #fff #fff #808070; background: #fff; }
.combo input { flex: 1; min-width: 0; border: 0; padding: 0 1px; outline: 0; background: none; font: 12px "Liberation Mono", monospace; }
.combo input::selection { background: #316ac5; color: #fff; }
.combo button { width: 16px; background: #ece9d8; border: 1px solid; border-color: #fff #808070 #808070 #fff; }
.palette { display: grid; grid-template-columns: 16px 16px; gap: 3px 4px; align-content: start; padding: 3px 3px 0 4px; border-left: 1px solid #aca899; }
.palette button { height: 15px; }

.sheet { flex: 1; min-height: 0; display: flex; background: #fff; font-size: 12px; line-height: 16px; }
.grid { flex: 1; min-width: 0; }
.keys { display: grid; grid-template-columns: 53fr 67fr 109fr 95fr 88fr 67fr 67fr; gap: 3px; padding: 1px 2px 0; height: 17px; }
.keys button, td button { display: block; width: 100%; height: 15px; line-height: 11px; padding-top: 2px; background: #ece9d8; border: 1px solid #000; box-shadow: inset 1px 1px #fff, inset -1px -1px #aca899; }
.keys button { height: 16px; padding-top: 1px; line-height: 13px; }
.line { display: grid; height: 18px; border-bottom: 1px solid #ece9d8; white-space: nowrap; line-height: 18px; }
.line span { padding: 0 4px; border-right: 1px solid #ece9d8; overflow: hidden; }
.line .num { text-align: right; }
.lens { grid-template-columns: 267fr 189fr 33fr 80fr; }
.lens span:nth-child(3), .beam span:nth-child(odd) { border-right: 0; }
.line span:nth-child(n+3):last-child { padding: 0 5px 0 0; border-right: 0; }
.beam { grid-template-columns: 117fr 80fr 104fr 83fr 105fr 80fr; }
.beam .hot { background: #000; color: #fff; padding: 0 2px; margin: 1px 0; }
table { table-layout: fixed; width: 100%; border-collapse: separate; border-spacing: 0; }
tr { height: 18px; }
.c1 { width: 43px; } .cv { width: 82px; } .cb { width: 30px; } .cw { width: 37px; } .cg { width: 75px; }
th, td { height: 18px; padding: 0 2px; line-height: 14px; white-space: nowrap; }
th { font-weight: 400; border-top: 1px solid #000; border-bottom: 3px double #000; padding: 2px 0 0; line-height: 12px; }
td { text-align: right; border-bottom: 1px solid #ece9d8; }
td:nth-child(odd), th { border-right: 1px solid #ece9d8; }
td:nth-child(odd) { padding: 0 1px 0 2px; }
td:nth-child(8) { padding-right: 3px; }
td.mid { text-align: center; }
td .n { text-align: right; padding-right: 9px; }
td.sp { padding: 0 22px 0 23px; }
.scroll { width: 17px; display: flex; flex-direction: column; justify-content: space-between; background: #f6f5ee; }
.scroll button { width: 16px; height: 16px; border: 1px solid #dddacb; border-radius: 2px; }

.status { display: flex; gap: 3px; height: 22px; padding: 2px 0 1px; }
.status span { padding: 0 3px 0 1px; line-height: 18px; border: 1px solid; border-color: #aca899 #fff #fff #aca899; }
```
FILE: plots.js
```js
const NS = 'http://www.w3.org/2000/svg';
function add(parent, tag, attrs) {
  const el = document.createElementNS(NS, tag);
  for (const k in attrs) el.setAttribute(k, attrs[k]);
  parent.appendChild(el);
  return el;
}

// Spot pattern: a square ray grid clipped to the pupil, one per wavelength.
function spots(pitch, color) {
  let d = '';
  for (let i = -8.5; i <= 8.5; i++) for (let j = -8.5; j <= 8.5; j++) {
    if (Math.hypot(i, j) < 8.58) d += `M${Math.round(327 + i * pitch)} ${Math.round(413 + j * pitch)}h1v1h-1z`;
  }
  add(document.getElementById('dots'), 'path', { d, fill: color });
}
spots(5.6, '#a83038');
spots(12.7, '#202050');

// Bessel function of the first kind, order one.
function j1(x) {
  let s = 0;
  const n = 40;
  for (let k = 0; k < n; k++) { const t = (k + 0.5) * Math.PI / n; s += Math.cos(t - x * Math.sin(t)); }
  return s / n;
}

// Point spread surface, drawn from the back row to the front.
const psf = document.getElementById('psf');
const H = 187, ROWS = 32, MID = 18;
for (let r = ROWS; r >= 0; r--) {
  const x0 = 791 + 76 * r / ROWS, base = 435.5 - 101 * r / ROWS;
  const pts = [];
  for (let k = 0; k <= 152; k++) {
    const x = x0 + 2 * k;
    const cx = x0 + 153;
    const dx = (x - cx) / 13, dy = (r - MID) / 1.35;
    const rad = Math.hypot(dx, dy) || 0.001;
    let v = H * Math.pow(2 * j1(rad) / rad, 2);
    if (rad > 3.83) v = v * 2.6 + Math.abs(Math.sin(rad * 1.6 + dx)) * 1.1;
    pts.push(`${x.toFixed(1)} ${(base - v).toFixed(1)}`);
  }
  add(psf, 'linearGradient', { id: 'h' + r, href: '#heat', gradientUnits: 'userSpaceOnUse', x1: 0, x2: 0, y1: base, y2: base - H });
  add(psf, 'path', { d: `M${x0} ${base}L${pts.join('L')}V${base}z`, fill: '#fff' });
  add(psf, 'path', { d: 'M' + pts.join('L'), fill: 'none', stroke: Math.abs(r - MID) < 5 ? `url(#h${r})` : '#4b0082' });
}
const scale = document.getElementById('scale');
add(scale, 'linearGradient', { id: 'hs', href: '#heat', gradientUnits: 'userSpaceOnUse', x1: 0, x2: 0, y1: 451, y2: 183 });
add(scale, 'path', { d: 'M1201 183h11v268h-11z', fill: 'url(#hs)' });

const cmd = document.getElementById('cmd');
cmd.focus();
cmd.select();
```
